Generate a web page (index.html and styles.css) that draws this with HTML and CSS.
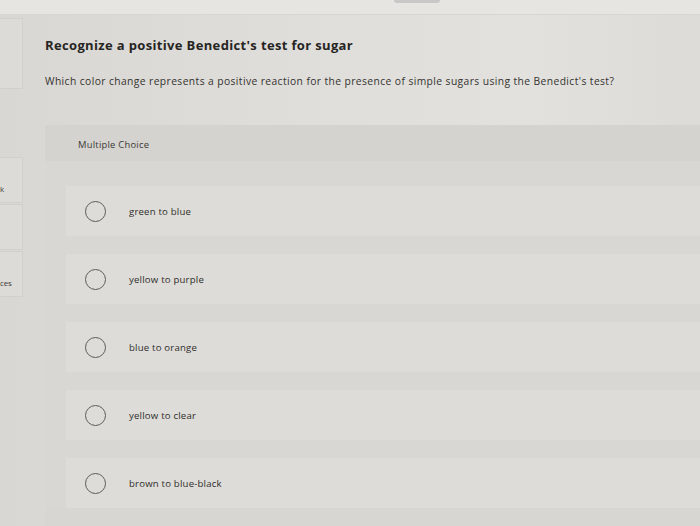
FILE: index.html
```html
<!DOCTYPE html>
<html>
<head>
<meta charset="utf-8">
<link rel="stylesheet" href="styles.css">
</head>
<body>
<div class="topbar"><div class="tab"></div></div>
<div class="page">
  <aside class="sidebar">
    <div class="side-box side-top"></div>
    <div class="side-list">
      <div class="side-box side-item"><span>k</span></div>
      <div class="side-box side-item"></div>
      <div class="side-box side-item"><span>ces</span></div>
    </div>
  </aside>
  <main class="content">
    <h1 class="title">Recognize a positive Benedict's test for sugar</h1>
    <p class="question">Which color change represents a positive reaction for the presence of simple sugars using the Benedict's test?</p>
    <section class="panel">
      <div class="panel-head">Multiple Choice</div>
      <div class="options">
        <div class="option"><span class="radio"></span><span class="label">green to blue</span></div>
        <div class="option"><span class="radio"></span><span class="label">yellow to purple</span></div>
        <div class="option"><span class="radio"></span><span class="label">blue to orange</span></div>
        <div class="option"><span class="radio"></span><span class="label">yellow to clear</span></div>
        <div class="option"><span class="radio"></span><span class="label">brown to blue-black</span></div>
      </div>
    </section>
  </main>
</div>
</body>
</html>
```
FILE: styles.css
```css
html, body {
  margin: 0;
  padding: 0;
}
body {
  width: 700px;
  height: 526px;
  overflow: hidden;
  background: linear-gradient(90deg, #d9d7d3 0%, #e0dedb 45%, #e2e1de 75%, #dcdbd8 100%);
  font-family: "Open Sans", "Lato", sans-serif;
  color: #2b2a28;
}
.topbar {
  height: 14px;
  background: #e6e5e2;
  border-bottom: 1px solid #d8d6d2;
  position: relative;
}
.tab {
  position: absolute;
  left: 394px;
  top: 0;
  width: 46px;
  height: 3px;
  background: #c9c8c6;
  border-radius: 0 0 6px 6px;
}
.page {
  display: flex;
  height: 511px;
}
.sidebar {
  width: 23px;
  flex: none;
  padding-top: 3px;
}
.side-box {
  border: 1px solid #d2d0cc;
  border-left: none;
  background: #dddbd7;
  box-sizing: border-box;
}
.side-top {
  height: 71px;
}
.side-list {
  margin-top: 68px;
  display: flex;
  flex-direction: column;
  gap: 1px;
}
.side-item {
  height: 46px;
  display: flex;
  align-items: flex-end;
  padding-bottom: 8px;
  font-size: 7.8px;
  color: #3a3936;
  overflow: hidden;
}
.side-item:first-child {
  align-items: center;
  padding-bottom: 0;
  padding-top: 18px;
}
.content {
  flex: 1;
  padding-left: 22px;
  display: flex;
  flex-direction: column;
}
.title {
  margin: 22px 0 0 0;
  font-size: 13px;
  font-weight: 700;
  letter-spacing: 0.35px;
  color: #262523;
  line-height: 16px;
}
.question {
  margin: 22px 0 0 0;
  font-size: 10.3px;
  letter-spacing: 0.4px;
  color: #34332f;
  line-height: 12px;
}
.panel {
  margin-top: 38px;
  flex: 1;
  background: #d8d6d2;
  display: flex;
  flex-direction: column;
}
.panel-head {
  height: 36px;
  padding-left: 33px;
  padding-top: 13px;
  box-sizing: border-box;
  font-size: 9.4px;
  letter-spacing: 0.25px;
  color: #3b3a37;
  background: #d5d3cf;
}
.options {
  background: #d9d7d3;
  padding: 25px 0 0 21px;
  display: flex;
  flex-direction: column;
  gap: 18px;
}
.option {
  height: 50px;
  background: #dddcd8;
  display: flex;
  align-items: center;
  padding-left: 19px;
}
.radio {
  width: 21px;
  height: 21px;
  border: 1.3px solid #5d5c59;
  border-radius: 50%;
  box-sizing: border-box;
  flex: none;
}
.label {
  margin-left: 23px;
  font-size: 9.6px;
  letter-spacing: 0.2px;
  color: #2f2e2b;
}
```
